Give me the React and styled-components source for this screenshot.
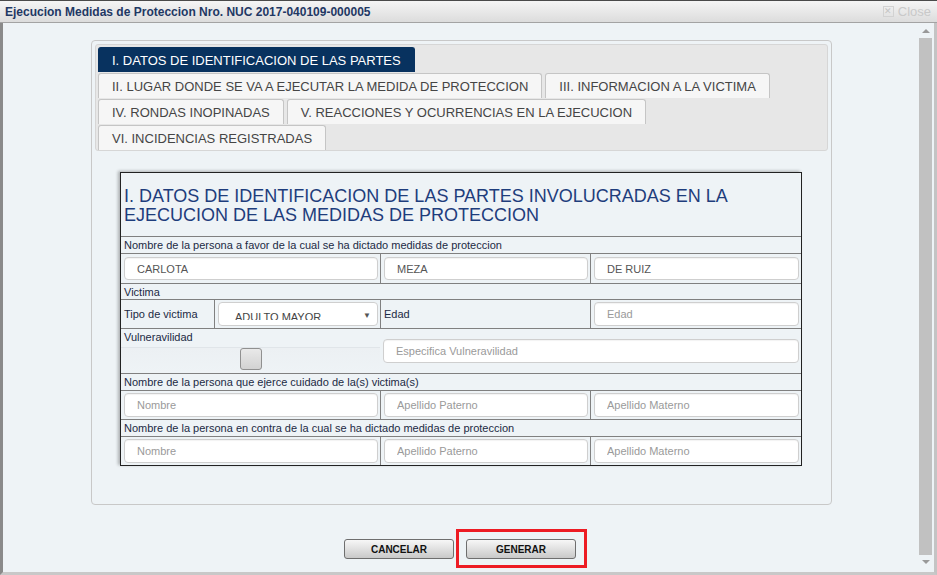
import styled, { createGlobalStyle } from "styled-components";

const GlobalStyle = createGlobalStyle`
  html, body {
    margin: 0;
    padding: 0;
  }
  body {
    font-family: "Liberation Sans", Arial, sans-serif;
    background: #eef3f6;
  }
  * {
    box-sizing: border-box;
  }
`

const StyledWindow = styled.div`
  width: 937px;
  height: 575px;
  display: flex;
  flex-direction: column;
  border-top: 1px solid #4a4a4a;
  background: #eef3f6;
  overflow: hidden;
`

const StyledTitleBar = styled.div`
  height: 22px;
  flex-shrink: 0;
  display: flex;
  align-items: center;
  justify-content: space-between;
  padding: 0 6px 0 5px;
  background: linear-gradient(#f5f5f5, #dcdcdc);
  border-bottom: 1px solid #a3a3a3;
`

const StyledTitle = styled.span`
  font-size: 12px;
  font-weight: bold;
  color: #1f3864;
`

const StyledClose = styled.span`
  display: flex;
  align-items: center;
  gap: 4px;
  font-size: 13px;
  color: #c9c9c9;
`

const StyledCloseIcon = styled.span`
  width: 11px;
  height: 11px;
  border: 1px solid #d2d2d2;
  display: flex;
  align-items: center;
  justify-content: center;
  font-size: 9px;
  line-height: 1;
  color: #c4c4c4;
`

const StyledBody = styled.div`
  flex: 1;
  display: flex;
  border-left: 3px solid #8a8a8a;
  border-right: 3px solid #c4c4c4;
  border-bottom: 3px solid #c8c8c8;
  min-height: 0;
`

const StyledContent = styled.div`
  flex: 1;
  padding: 17px 0 0 88px;
`

const StyledScrollbar = styled.div`
  width: 17px;
  display: flex;
  flex-direction: column;
  align-items: flex-end;
  padding: 6px 2px 8px 2px;
  gap: 5px;
`

const StyledArrow = styled.span`
  width: 13px;
  display: flex;
  justify-content: center;
  &:before {
    content: '';
    border-left: 4px solid transparent;
    border-right: 4px solid transparent;
    ${props => props.down
      ? 'border-top: 4px solid #999;'
      : 'border-bottom: 4px solid #999;'}
  }
`

const StyledThumb = styled.div`
  flex: 1;
  width: 13px;
  background: #c1c1c1;
`

const StyledPanel = styled.div`
  width: 741px;
  height: 465px;
  border: 1px solid #c8c8c8;
  border-radius: 4px;
  padding: 3px;
`

const StyledTabBar = styled.div`
  display: flex;
  flex-wrap: wrap;
  gap: 1px 3px;
  padding: 2px 2px 0;
  background: #e7e7e7;
  border: 1px solid #d6d6d6;
  border-radius: 3px;
`

const StyledTab = styled.div`
  height: 25px;
  display: flex;
  align-items: center;
  padding: 0 13px;
  font-size: 13px;
  border: 1px solid ${props => props.active ? '#08325f' : '#c5c5c5'};
  border-bottom: none;
  border-radius: 3px 3px 0 0;
  background: ${props => props.active ? '#08325f' : '#f6f6f6'};
  color: ${props => props.active ? '#ffffff' : '#454545'};
  white-space: nowrap;
`

const StyledForm = styled.div`
  width: 682px;
  margin: 21px 0 0 25px;
  border: 1px solid #222;
  box-shadow: -2px -1px 3px rgba(0, 0, 0, 0.28);
  background: #eef3f6;
`

const StyledHeading = styled.h2`
  margin: 0;
  height: 63px;
  padding: 14px 3px 0;
  font-size: 18px;
  line-height: 19px;
  font-weight: normal;
  color: #1e3d7c;
`

const StyledRow = styled.div`
  display: grid;
  grid-template-columns: ${props => props.columns || '1fr'};
  height: ${props => props.height}px;
  border-top: 1px solid #808080;
  box-sizing: content-box;
`

const StyledCell = styled.div`
  display: flex;
  align-items: center;
  padding: 0 2px 0 3px;
  font-size: 11px;
  color: #1c2a44;
  & + & {
    border-left: 1px solid #808080;
  }
`

const StyledLabel = styled.div`
  font-size: 11px;
  line-height: 16px;
  padding-left: 3px;
  color: #1c2a44;
`

const StyledInput = styled.input`
  width: 100%;
  height: ${props => props.tall ? 23 : 24}px;
  border: 1px solid #cfcfcf;
  border-radius: 4px;
  background: #fff;
  box-shadow: inset 0 1px 1px rgba(0, 0, 0, 0.05);
  padding: 0 12px;
  font-family: "Liberation Sans", Arial, sans-serif;
  font-size: 11px;
  color: #555;
  outline: none;
  &::placeholder {
    color: #9a9a9a;
  }
`

const StyledSelect = styled.div`
  width: 100%;
  height: 24px;
  border: 1px solid #cfcfcf;
  border-radius: 4px;
  background: #fff;
  padding: 7px 0 0 16px;
  display: flex;
  justify-content: space-between;
`

/* the reference shows the selected option cut off at its bottom */
const StyledSelectText = styled.span`
  display: block;
  height: 10px;
  overflow: hidden;
  line-height: 14px;
  font-size: 11px;
  color: #444;
`

const StyledSelectArrow = styled.span`
  font-size: 8px;
  color: #555;
  margin: 1px 6px 0 0;
`

const StyledVulnCell = styled.div`
  display: flex;
  flex-direction: column;
`

const StyledVulnLabel = styled.div`
  height: 18px;
  font-size: 11px;
  line-height: 14px;
  padding: 1px 0 0 3px;
  color: #1c2a44;
`

const StyledCheckArea = styled.div`
  flex: 1;
  display: flex;
  justify-content: center;
  border-top: 1px solid #e0e5e9;
  background: linear-gradient(#ecf0f3, #eef3f6);
`

const StyledCheckbox = styled.span`
  width: 22px;
  height: 22px;
  border: 1px solid #909090;
  border-radius: 3px;
  background: linear-gradient(#e9e9e9, #d2d2d2);
`

const StyledButtons = styled.div`
  display: flex;
  justify-content: center;
  gap: 12px;
  margin: 34px 88px 0 0;
`

const StyledButton = styled.button`
  position: relative;
  width: 110px;
  height: 20px;
  border: 1px solid #6e6e6e;
  border-radius: 3px;
  background: linear-gradient(#f7f7f7, #e0e0e0 50%, #c9c9c9);
  font-family: "Liberation Sans", Arial, sans-serif;
  font-size: 10px;
  font-weight: bold;
  color: #111;
  padding: 0;
  &:after {
    content: '';
    display: ${props => props.highlight ? 'block' : 'none'};
    position: absolute;
    inset: -11px -12px -10px -11px;
    border: 3px solid #ed1c24;
  }
`

const tabs = [
  'I. DATOS DE IDENTIFICACION DE LAS PARTES',
  'II. LUGAR DONDE SE VA A EJECUTAR LA MEDIDA DE PROTECCION',
  'III. INFORMACION A LA VICTIMA',
  'IV. RONDAS INOPINADAS',
  'V. REACCIONES Y OCURRENCIAS EN LA EJECUCION',
  'VI. INCIDENCIAS REGISTRADAS',
]

const threeCols = '259px 210px 1fr'

function NameRow({ values, placeholders, height }) {
  return (
    <StyledRow columns={threeCols} height={height}>
      {placeholders.map((ph, i) => (
        <StyledCell key={ph}>
          <StyledInput
            tall={height > 28}
            placeholder={ph}
            defaultValue={values ? values[i] : undefined}
            readOnly
          />
        </StyledCell>
      ))}
    </StyledRow>
  )
}

function App() {
  return (
    <>
      <GlobalStyle />
      <StyledWindow>
        <StyledTitleBar>
          <StyledTitle>Ejecucion Medidas de Proteccion Nro. NUC 2017-040109-000005</StyledTitle>
          <StyledClose>
            <StyledCloseIcon>✕</StyledCloseIcon>
            Close
          </StyledClose>
        </StyledTitleBar>
        <StyledBody>
          <StyledContent>
            <StyledPanel>
              <StyledTabBar>
                {tabs.map((tab, i) => (
                  <StyledTab key={tab} active={i === 0}>{tab}</StyledTab>
                ))}
              </StyledTabBar>
              <StyledForm>
                <StyledHeading>
                  I. DATOS DE IDENTIFICACION DE LAS PARTES INVOLUCRADAS EN LA EJECUCION DE LAS MEDIDAS DE PROTECCION
                </StyledHeading>
                <StyledRow height={16}>
                  <StyledLabel>Nombre de la persona a favor de la cual se ha dictado medidas de proteccion</StyledLabel>
                </StyledRow>
                <NameRow
                  height={29}
                  values={['CARLOTA', 'MEZA', 'DE RUIZ']}
                  placeholders={['Nombre', 'Apellido Paterno', 'Apellido Materno']}
                />
                <StyledRow height={15}>
                  <StyledLabel>Victima</StyledLabel>
                </StyledRow>
                <StyledRow columns="93px 166px 210px 1fr" height={28}>
                  <StyledCell>Tipo de victima</StyledCell>
                  <StyledCell>
                    <StyledSelect>
                      <StyledSelectText>ADULTO MAYOR</StyledSelectText>
                      <StyledSelectArrow>▼</StyledSelectArrow>
                    </StyledSelect>
                  </StyledCell>
                  <StyledCell>Edad</StyledCell>
                  <StyledCell>
                    <StyledInput placeholder="Edad" readOnly />
                  </StyledCell>
                </StyledRow>
                <StyledRow columns="259px 1fr" height={44}>
                  <StyledVulnCell>
                    <StyledVulnLabel>Vulneravilidad</StyledVulnLabel>
                    <StyledCheckArea>
                      <StyledCheckbox />
                    </StyledCheckArea>
                  </StyledVulnCell>
                  <StyledCell>
                    <StyledInput placeholder="Especifica Vulneravilidad" readOnly />
                  </StyledCell>
                </StyledRow>
                <StyledRow height={16}>
                  <StyledLabel>Nombre de la persona que ejerce cuidado de la(s) victima(s)</StyledLabel>
                </StyledRow>
                <NameRow height={28} placeholders={['Nombre', 'Apellido Paterno', 'Apellido Materno']} />
                <StyledRow height={16}>
                  <StyledLabel>Nombre de la persona en contra de la cual se ha dictado medidas de proteccion</StyledLabel>
                </StyledRow>
                <NameRow height={28} placeholders={['Nombre', 'Apellido Paterno', 'Apellido Materno']} />
              </StyledForm>
            </StyledPanel>
            <StyledButtons>
              <StyledButton>CANCELAR</StyledButton>
              <StyledButton highlight>GENERAR</StyledButton>
            </StyledButtons>
          </StyledContent>
          <StyledScrollbar>
            <StyledArrow />
            <StyledThumb />
            <StyledArrow down />
          </StyledScrollbar>
        </StyledBody>
      </StyledWindow>
    </>
  )
}

export default App
